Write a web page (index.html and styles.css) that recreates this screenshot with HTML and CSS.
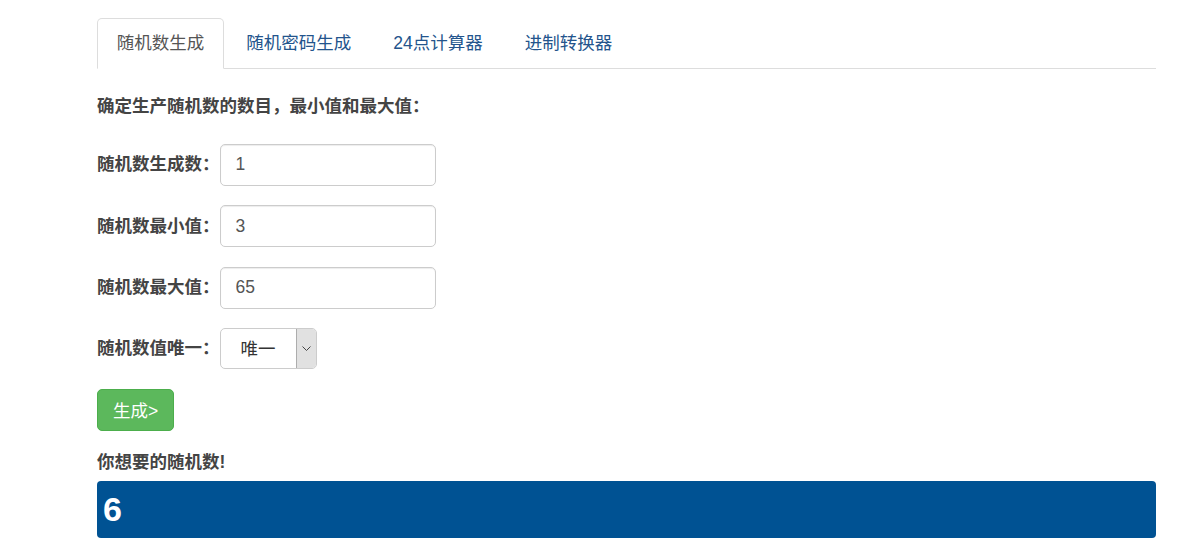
FILE: index.html
```html
<!DOCTYPE html>
<html lang="zh-CN">
<head>
<meta charset="utf-8">
<title>随机数生成</title>
<link rel="stylesheet" href="styles.css">
</head>
<body>
<div class="container">
  <ul class="nav-tabs">
    <li class="tab active"><a href="#">随机数生成</a></li>
    <li class="tab"><a href="#">随机密码生成</a></li>
    <li class="tab"><a href="#">24点计算器</a></li>
    <li class="tab"><a href="#">进制转换器</a></li>
  </ul>

  <form class="gen-form">
    <p class="intro">确定生产随机数的数目，最小值和最大值：</p>

    <div class="form-group">
      <label class="form-label">随机数生成数：</label>
      <input class="form-control" type="text" value="1">
    </div>
    <div class="form-group">
      <label class="form-label">随机数最小值：</label>
      <input class="form-control" type="text" value="3">
    </div>
    <div class="form-group">
      <label class="form-label">随机数最大值：</label>
      <input class="form-control" type="text" value="65">
    </div>
    <div class="form-group">
      <label class="form-label">随机数值唯一：</label>
      <div class="select-wrap">
        <select class="select-native">
          <option>唯一</option>
          <option>不唯一</option>
        </select>
        <span class="select-arrow">
          <svg width="9" height="6" viewBox="0 0 9 6"><path d="M0.5 0.5 L4.5 4.5 L8.5 0.5" fill="none" stroke="#444" stroke-width="1"/></svg>
        </span>
      </div>
    </div>

    <button type="button" class="btn-success">生成&gt;</button>

    <p class="result-label">你想要的随机数!</p>
    <div class="result-box">6</div>
  </form>
</div>
</body>
</html>
```

FILE: styles.css
```css
* {
  box-sizing: border-box;
}

body {
  margin: 0;
  font-family: "Liberation Sans", "Noto Sans CJK SC", sans-serif;
  font-size: 17.5px;
  line-height: 25px;
  color: #333;
  background: #fff;
}

.container {
  width: 1059px;
  margin-left: 97px;
  padding-top: 18px;
}

.nav-tabs {
  list-style: none;
  margin: 0;
  padding: 0;
  display: flex;
  border-bottom: 1px solid #ddd;
}

.tab {
  margin-bottom: -1px;
  margin-right: 2.5px;
}

.tab a {
  display: block;
  padding: 12px 18.75px;
  border: 1px solid transparent;
  border-radius: 5px 5px 0 0;
  color: #23548c;
  text-decoration: none;
  line-height: 25px;
}

.tab.active a {
  color: #555;
  background: #fff;
  border-color: #ddd;
  border-bottom-color: transparent;
}

.gen-form {
  padding-top: 25px;
}

.intro {
  margin: 0 0 24.5px;
  font-weight: bold;
  color: #444;
}

.form-group {
  display: flex;
  align-items: center;
  margin-bottom: 19.5px;
}

.form-label {
  font-weight: bold;
  color: #444;
  margin-right: 0;
}

.form-control {
  width: 216px;
  height: 42px;
  padding: 7.5px 15px;
  font-family: inherit;
  font-size: 17.5px;
  color: #555;
  background: #fff;
  border: 1px solid #ccc;
  border-radius: 5px;
  box-shadow: inset 0 1px 1px rgba(0, 0, 0, 0.075);
}

.select-wrap {
  display: flex;
  width: 97px;
  height: 41px;
  border: 1px solid #ccc;
  border-radius: 5px;
  background: #fff;
  overflow: hidden;
}

.select-native {
  flex: 1;
  appearance: none;
  -webkit-appearance: none;
  border: none;
  background: transparent;
  padding: 0 0 0 20px;
  font-family: inherit;
  font-size: 17.5px;
  color: #333;
  outline: none;
}

.select-arrow {
  width: 20px;
  display: flex;
  align-items: center;
  justify-content: center;
  background: #e1e1e1;
  border-left: 1px solid #adadad;
}

.btn-success {
  display: block;
  height: 42px;
  padding: 0 15px;
  font-family: inherit;
  font-size: 17.5px;
  color: #fff;
  background: #5cb85c;
  border: 1px solid #4cae4c;
  border-radius: 5px;
  cursor: pointer;
}

.result-label {
  margin: 19.5px 0 5.5px;
  font-weight: bold;
  color: #444;
}

.result-box {
  height: 57px;
  padding: 0 6px;
  display: flex;
  align-items: center;
  background: #005293;
  color: #fff;
  font-size: 34px;
  font-weight: bold;
  border-radius: 4px;
}
```
